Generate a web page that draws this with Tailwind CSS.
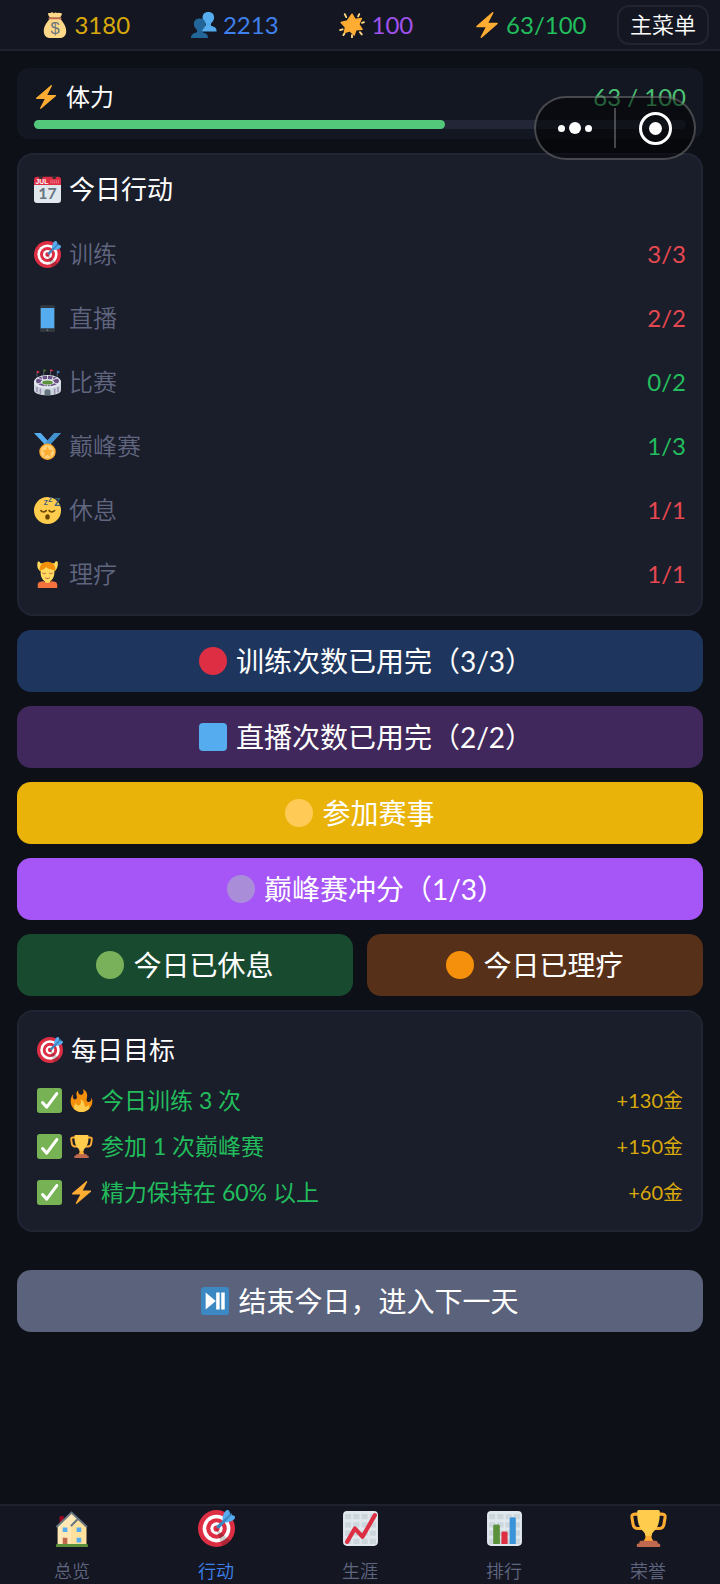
<!DOCTYPE html>
<html lang="zh-CN">
<head>
  <meta charset="UTF-8">
  <meta name="viewport" content="width=device-width, initial-scale=1.0">
  <title>今日行动</title>
  <script src="https://cdn.jsdelivr.net/npm/@tailwindcss/browser@4"></script>
</head>
<body class="bg-[#0d1017] text-white font-['Lato','Noto_Sans_CJK_SC',sans-serif] font-normal">

  <!-- iconos -->
  <svg class="hidden" xmlns="http://www.w3.org/2000/svg">
    <symbol id="bolt" viewBox="0 0 36 36">
      <path fill="#FFAC33" d="M32.938 15.651C32.792 15.26 32.418 15 32 15H19.925L26.89 1.458c.219-.426.106-.947-.271-1.243C26.437.071 26.218 0 26 0c-.233 0-.466.082-.653.243L18 6.588 3.347 19.243c-.316.273-.43.714-.284 1.105S3.582 21 4 21h12.075L9.11 34.542c-.219.426-.106.947.271 1.243.182.144.401.215.619.215.233 0 .466-.082.653-.243L18 29.412l14.653-12.655c.317-.273.43-.714.285-1.106z"/>
    </symbol>
    <symbol id="target" viewBox="0 0 36 36">
      <circle fill="#DD2E44" cx="18" cy="18" r="18"/><circle fill="#FFF" cx="18" cy="18" r="13.5"/>
      <circle fill="#DD2E44" cx="18" cy="18" r="10"/><circle fill="#FFF" cx="18" cy="18" r="6"/>
      <circle fill="#DD2E44" cx="18" cy="18" r="3"/>
      <path opacity=".2" d="M18.24 18.282l13.144 11.754s-2.647 3.376-7.89 5.109L17.579 18.42l.661-.138z"/>
      <path fill="#55ACEE" d="M24.016 6.981c-.403 2.079 0 4.691 0 4.691l7.054-7.388c.291-1.454-.528-3.932-1.718-4.238-1.19-.306-4.079.803-5.336 6.935zm5.003 5.003c-2.079.403-4.691 0-4.691 0l7.388-7.054c1.454-.291 3.932.528 4.238 1.718.306 1.19-.803 4.079-6.935 5.336z"/>
      <path fill="#3A87C2" d="M32.798 4.485L21.176 17.587c-.362.362-1.673.882-2.51.046-.836-.836-.419-2.08-.057-2.443L31.815 3.501s.676-.635 1.159-.152-.176 1.136-.176 1.136z"/>
    </symbol>
    <symbol id="money" viewBox="0 0 36 36">
      <path fill="#FDD888" d="M11 9C7 14 2.500 19 2.500 26.500 2.500 33 7 36 12 36h12c5 0 9.500-3 9.500-9.500C33.500 19 29 14 25 9z"/>
      <path fill="#FDD888" d="M11 8c-1-2-3-4-2.500-6C9 .500 11 2 12.500 1S15 .500 16 1.500 18.500 0 20 1s2-.500 3.500 0S27 1 27.500 2.500C28 4 26 6 25 8z"/>
      <path fill="#BF6952" d="M10 7.500h16a1.200 1.200 0 0 1 0 2.500H10a1.200 1.200 0 0 1 0-2.500z"/>
      <text x="18" y="31" font-size="23" font-family="Liberation Sans" text-anchor="middle" fill="#67757F">$</text>
    </symbol>
    <symbol id="people" viewBox="0 0 36 36">
      <path fill="#55ACEE" d="M35.500 27c0-6-4-6.500-7-7.500-1.500-.500-1.500-3 0-4.500 2-2 3.500-4.500 3.500-7.500C32 3 29 0 24 0s-8 3-8 7.500c0 3 1.500 5.500 3.500 7.500 1.500 1.500 1.500 4 0 4.500-3 1-7 2-7 7.500z"/>
      <path fill="#226699" d="M23.500 36c0-6-4-6.500-7-7.500-1.500-.500-1.500-3 0-4.500 2-2 3.500-4.500 3.500-7.500C20 12 17 9 12 9s-8 3-8 7.500c0 3 1.500 5.500 3.500 7.500 1.500 1.500 1.500 4 0 4.500-3 1-7.500 2-7.500 7.500z"/>
    </symbol>
    <symbol id="star" viewBox="0 0 36 36">
      <path fill="#FFAC33" stroke="#FFAC33" stroke-width="2" stroke-linejoin="round" d="M18 3l4.500 7.500 8.500-1.500-3.500 8L32 24l-8.500.500L21 32l-6-6-7.500 2.500L9 21l-6-6.500 8.500-2z"/>
      <path stroke="#FFD983" stroke-width="2.600" stroke-linecap="round" d="M8 3l2 4M28 3l-1.500 3M32 15l2.500-1M29 28l2.500 3M18 32v3M5 24l-3.500 1M6 32l1.500-2"/>
    </symbol>
    <symbol id="calendar" viewBox="0 0 36 36">
      <path fill="#E1E8ED" d="M36 32a4 4 0 0 1-4 4H4a4 4 0 0 1-4-4V8h36z"/>
      <path fill="#DD2E44" d="M4 1h28a4 4 0 0 1 4 4v7H0V5a4 4 0 0 1 4-4z"/>
      <circle cx="9" cy="1.500" r="2.500" fill="#292F33"/><circle cx="27" cy="1.500" r="2.500" fill="#292F33"/>
      <path stroke="#F4ABBA" stroke-width="1.300" stroke-dasharray="1.300 1.200" d="M22 6.500h12M22 9h12"/>
      <text x="2" y="11" font-size="9" font-weight="700" font-family="Liberation Sans" fill="#fff">JUL</text>
      <text x="18" y="31" font-size="21" font-weight="700" font-family="Lato" text-anchor="middle" fill="#66757F">17</text>
    </symbol>
    <symbol id="phone" viewBox="0 0 36 36">
      <rect x="8" y="0" width="20" height="36" rx="2.500" fill="#31373D"/>
      <rect x="9" y="4" width="18" height="27" fill="#55ACEE"/><circle cx="18" cy="33.500" r="1.200" fill="#66757F"/>
    </symbol>
    <symbol id="stadium" viewBox="0 0 36 36">
      <path stroke="#66757F" d="M4 10V3M13 8V1M22 8V1M31 10V3"/>
      <path fill="#DD2E44" d="M4 2l4 2-4 2zM22 0l4 2-4 2z"/><path fill="#3B94D9" d="M31 2l4 2-4 2z"/><path fill="#3E721D" d="M13 0l4 2-4 2z"/>
      <path fill="#CCD6DD" d="M0 17h36v11c0 5-8 7-18 7S0 33 0 28z"/>
      <ellipse cx="18" cy="17" rx="18" ry="9" fill="#E1E8ED"/>
      <ellipse cx="18" cy="16" rx="15.500" ry="7" fill="#6A5085"/>
      <path stroke="#E1E8ED" stroke-width="1.200" d="M18 8v16M10 9l5 14M26 9l-5 14M4 12l28 8M32 12L4 20"/>
      <ellipse cx="18" cy="17.500" rx="9" ry="4.200" fill="#E1E8ED"/><ellipse cx="18" cy="18" rx="7" ry="2.800" fill="#5C913B"/>
      <path stroke="#9B8BB5" stroke-width="2" d="M4 24v7M8.500 26v7M27.500 26v7M32 24v7"/>
      <path fill="#66757F" d="M14 35v-5c0-4 8-4 8 0v5z"/>
    </symbol>
    <symbol id="medal" viewBox="0 0 36 36">
      <path fill="#55ACEE" d="M36 0h-9l-9 10-9-10H0l14 15h8z"/><path fill="#3B88C3" d="M27 0h9L22 15h-8z" opacity=".7"/>
      <circle cx="18" cy="25" r="11" fill="#FFAC33"/><circle cx="18" cy="25" r="9" fill="#FFD17A"/>
      <path fill="#FFAC33" d="M18 17.500l2.200 5 5.400.500-4.100 3.600 1.300 5.400-4.800-2.900-4.800 2.900 1.300-5.400-4.100-3.600 5.400-.500z"/>
    </symbol>
    <symbol id="sleepy" viewBox="0 0 36 36">
      <circle cx="18" cy="18" r="18" fill="#FFCC4D"/>
      <path fill="none" stroke="#664500" stroke-width="2" stroke-linecap="round" d="M9 18c2 2.500 5.500 2.500 7.500 0M20 18c2 2.500 5.500 2.500 7.500 0"/>
      <ellipse cx="18" cy="26.500" rx="3" ry="3.500" fill="#664500"/>
      <g font-family="Liberation Sans" font-weight="700" fill="#3B5F7C"><text x="13" y="11" font-size="9">Z</text><text x="19" y="7" font-size="9">Z</text><text x="27" y="12" font-size="14">Z</text></g>
    </symbol>
    <symbol id="massage" viewBox="0 0 36 36">
      <path fill="#FFDC5D" d="M5 1c2-1 3 0 3.500 2h19C28 0 30 0 31.500 1c1 4 0 8-3 12h-21C4 10 4 5 5 1z"/>
      <path fill="#F4900C" d="M7.500 11C7.500 5 12 1 18 1s10.500 4 10.500 10l-2 4h-17z"/>
      <path fill="#FFDC5D" d="M9 12c4 0 6-2 7-4 3 3 8 4 11 4 1 8-2 13-5.500 15v3l-3.500 3-3.500-3v-3C11 25 8 20 9 12z"/>
      <path stroke="#C1694F" stroke-width="1.400" fill="none" stroke-linecap="round" d="M11.500 16c1 1 3 1 4 0M20.500 16c1 1 3 1 4 0M15.500 22.500c1.500 1 3.500 1 5 0"/>
      <path fill="#F4723E" d="M5 36v-4c0-4 3-5 9-5 1 3 7 3 8 0 6 0 9 1 9 5v4z"/>
    </symbol>
    <symbol id="check" viewBox="0 0 36 36">
      <rect width="36" height="36" rx="4" fill="#77B255"/>
      <path fill="none" stroke="#fff" stroke-width="4.400" stroke-linecap="round" stroke-linejoin="round" d="M8 21l6 6.500L28.500 8"/>
    </symbol>
    <symbol id="fire" viewBox="0 0 36 36">
      <path fill="#F4900C" d="M35 19c0-2.062-.367-4.039-1.040-5.868-.46 5.389-3.333 8.157-6.335 6.868-2.812-1.208-.917-5.917-.777-8.164.236-3.809-.012-8.169-6.931-11.794 2.875 5.500.333 8.917-2.333 9.125-2.958.231-5.667-2.542-4.667-7.042-3.238 2.386-3.332 6.402-2.333 9 1.042 2.708-.042 4.958-2.583 5.208-2.840.280-4.418-3.041-2.963-8.333C2.520 10.965 1 14.805 1 19c0 9.389 7.611 17 17 17s17-7.611 17-17z"/>
      <path fill="#FFCC4D" d="M28.394 23.999c.148 3.084-2.561 4.293-4.019 3.709-2.106-.843-1.541-2.291-2.083-5.291s-2.625-5.083-5.708-6c2.250 6.333-1.247 8.667-3.080 9.084-1.872.426-3.753-.001-3.968-4.007C7.352 23.668 6 26.676 6 30c0 .368.023.730.055 1.090C9.125 34.124 13.342 36 18 36s8.875-1.876 11.945-4.910c.032-.360.055-.722.055-1.090 0-2.187-.584-4.236-1.606-6.001z"/>
    </symbol>
    <symbol id="trophy" viewBox="0 0 36 36">
      <path fill="none" stroke="#FFAC33" stroke-width="3" d="M10 4H5C2 4 1.500 5 2 8l1 6c.500 3 2 4 5 4h5M26 4h5c3 0 3.500 1 3 4l-1 6c-.500 3-2 4-5 4h-5"/>
      <path fill="#FFAC33" d="M15 22h6v5l2 4H13l2-4z"/>
      <path fill="#FFCC4D" d="M7 1.500C7 .500 8 0 9 0h18c1 0 2 .500 2 1.500C29 13 27 17 23 21c-1.500 1.500-2 3-2 4h-6c0-1-.500-2.500-2-4C9 17 7 13 7 1.500z"/>
      <path fill="#C1694F" d="M11 30h14c1.500 0 2 1 2 2.500h1c1 0 1.500 1 1.500 2s-.500 1.500-1.500 1.500H8c-1 0-1.500-.500-1.500-1.500s.500-2 1.500-2h1C9 31 9.500 30 11 30z"/>
    </symbol>
    <symbol id="playpause" viewBox="0 0 36 36">
      <rect width="36" height="36" rx="4" fill="#3B88C3"/>
      <path fill="#fff" d="M6 7l13 11L6 29zM19.500 7H24v22h-4.500zM26 7h4.500v22H26z"/>
    </symbol>
    <symbol id="house" viewBox="0 0 36 36">
      <path fill="#A0041E" d="M5.500 6h4v9h-4z"/>
      <path fill="#FFE8B6" d="M3.500 15.500L17 3l6 5 8.500 8v18h-28z"/><path fill="#FFD983" d="M16.500 17l7-7 8 7v17h-15z" opacity=".5"/>
      <path fill="none" stroke="#66757F" stroke-width="2" stroke-linecap="round" d="M3 16L17 2.500 31.500 16M17 15l6-6"/>
      <path fill="#55ACEE" d="M8.500 17H13v4.500H8.500zM22 17h4.500v4.500H22zM22 27h4.500v4.500H22z"/>
      <path fill="#C1694F" d="M8.500 27H13v7H8.500z"/><path fill="#5C913B" d="M3 33h29a1 1 0 0 1 1 1v2H2v-2a1 1 0 0 1 1-1z"/>
    </symbol>
    <symbol id="grid" viewBox="0 0 36 36">
      <rect x="1" y="1" width="34" height="34" rx="4" fill="#E1E8ED"/>
      <path fill="#CCD6DD" d="M3 4h6v5H3zM11 4h6v5h-6zM19 4h6v5h-6zM27 4h6v5h-6zM3 12h6v5H3zM11 12h6v5h-6zM19 12h6v5h-6zM27 12h6v5h-6zM3 20h6v5H3zM11 20h6v5h-6zM19 20h6v5h-6zM27 20h6v5h-6zM3 28h6v5H3zM11 28h6v5h-6zM19 28h6v5h-6zM27 28h6v5h-6z"/>
    </symbol>
    <symbol id="trend" viewBox="0 0 36 36">
      <use href="#grid"/>
      <path fill="none" stroke="#DD2E44" stroke-width="4" stroke-linecap="round" stroke-linejoin="round" d="M5 31l7.500-13L20 26 32 5"/>
    </symbol>
    <symbol id="bars" viewBox="0 0 36 36">
      <use href="#grid"/>
      <path fill="#5C913B" d="M7 33V15.500q0-1.500 1.500-1.500h3.500q1.500 0 1.500 1.500V33z"/>
      <path fill="#DD2E44" d="M15 33V22.500q0-1.500 1.500-1.500h3q1.500 0 1.500 1.500V33z"/>
      <path fill="#3B94D9" d="M23 33V8.500q0-1.500 1.500-1.500h3q1.500 0 1.500 1.500V33z"/>
    </symbol>
  </svg>

  <div class="relative flex flex-col min-h-screen">
    <header class="flex items-center h-[51px] pl-3 pr-[11px] bg-[#141722] border-b-2 border-[#1e222e] text-2xl">
      <div class="flex flex-1 justify-around items-center">
        <span class="flex items-center gap-[6px] text-[#d9a90c]"><svg class="size-[26px]"><use href="#money"/></svg>3180</span>
        <span class="flex items-center gap-[6px] text-[#3f80ec]"><svg class="size-[26px]"><use href="#people"/></svg>2213</span>
        <span class="flex items-center gap-[6px] text-[#a052ee]"><svg class="size-[26px]"><use href="#star"/></svg>100</span>
        <span class="flex items-center gap-[6px] text-[#22bd5c]"><svg class="size-[26px]"><use href="#bolt"/></svg>63/100</span>
      </div>
      <button class="h-10 w-[92px] rounded-xl border-2 border-[#212532] bg-[#141722] text-[22px] font-[350]">主菜单</button>
    </header>

    <main class="flex flex-col gap-[14px] px-[17px] pt-[17px]">
      <section class="rounded-xl bg-[#131722] px-[17px] pt-3 pb-[10px]">
        <div class="flex items-center justify-between h-[34px] mb-[6px] text-2xl">
          <span id="stamina-label" class="flex items-center gap-2"><svg class="size-6"><use href="#bolt"/></svg>体力</span>
          <span class="text-[#4cc274]">63 / 100</span>
        </div>
        <div class="h-[9px] rounded-full bg-[#222636]" role="progressbar" aria-labelledby="stamina-label" aria-valuenow="63" aria-valuemin="0" aria-valuemax="100">
          <div class="h-full rounded-full bg-[#54c87a]" style="width: 63%"></div>
        </div>
      </section>

      <section class="rounded-2xl border-2 border-[#212533] bg-[#1a1d2a] px-[15px] pt-[14px] pb-2">
        <h2 class="flex items-center gap-2 h-10 mb-[13px] text-[26px]"><svg class="size-[27px]"><use href="#calendar"/></svg>今日行动</h2>
        <ul class="text-2xl text-[#606680]">
          <li class="flex items-center justify-between h-16"><span class="flex items-center gap-2 font-[350]"><svg class="size-[27px]"><use href="#target"/></svg>训练</span><span class="text-[#e54850]">3/3</span></li>
          <li class="flex items-center justify-between h-16"><span class="flex items-center gap-2 font-[350]"><svg class="size-[27px]"><use href="#phone"/></svg>直播</span><span class="text-[#e54850]">2/2</span></li>
          <li class="flex items-center justify-between h-16"><span class="flex items-center gap-2 font-[350]"><svg class="size-[27px]"><use href="#stadium"/></svg>比赛</span><span class="text-[#22bd5c]">0/2</span></li>
          <li class="flex items-center justify-between h-16"><span class="flex items-center gap-2 font-[350]"><svg class="size-[27px]"><use href="#medal"/></svg>巅峰赛</span><span class="text-[#22bd5c]">1/3</span></li>
          <li class="flex items-center justify-between h-16"><span class="flex items-center gap-2 font-[350]"><svg class="size-[27px]"><use href="#sleepy"/></svg>休息</span><span class="text-[#e54850]">1/1</span></li>
          <li class="flex items-center justify-between h-16"><span class="flex items-center gap-2 font-[350]"><svg class="size-[27px]"><use href="#massage"/></svg>理疗</span><span class="text-[#e54850]">1/1</span></li>
        </ul>
      </section>

      <button class="flex items-center justify-center gap-[9px] h-[62px] pl-3 rounded-[14px] bg-[#1e355e] text-[28px]"><span class="size-7 rounded-full bg-[#dd2e44]"></span>训练次数已用完（3/3）</button>
      <button class="flex items-center justify-center gap-[9px] h-[62px] pl-3 rounded-[14px] bg-[#40275c] text-[28px]"><span class="size-7 rounded-sm bg-[#55acee]"></span>直播次数已用完（2/2）</button>
      <button class="flex items-center justify-center gap-[9px] h-[62px] rounded-[14px] bg-[#e9b30a] text-[28px]"><span class="size-7 rounded-full bg-[#ffcb56]"></span>参加赛事</button>
      <button class="flex items-center justify-center gap-[9px] h-[62px] pl-3 rounded-[14px] bg-[#a655f7] text-[28px]"><span class="size-7 rounded-full bg-[#aa8dd8]"></span>巅峰赛冲分（1/3）</button>
      <div class="grid grid-cols-2 gap-[14px]">
        <button class="flex items-center justify-center gap-[9px] h-[62px] rounded-[14px] bg-[#184a2f] text-[28px]"><span class="size-7 rounded-full bg-[#78b159]"></span>今日已休息</button>
        <button class="flex items-center justify-center gap-[9px] h-[62px] rounded-[14px] bg-[#573019] text-[28px]"><span class="size-7 rounded-full bg-[#f4900c]"></span>今日已理疗</button>
      </div>

      <section class="rounded-2xl border-2 border-[#212533] bg-[#1a1d2a] px-[18px] pt-[18px] pb-[15px]">
        <h2 class="flex items-center gap-2 h-10 mb-[7px] text-[26px]"><svg class="size-[26px]"><use href="#target"/></svg>每日目标</h2>
        <ul class="text-[23px] text-[#22bd5c]">
          <li class="flex items-center gap-2 h-[46px]"><svg class="size-[25px]"><use href="#check"/></svg><svg class="size-[23px]"><use href="#fire"/></svg>今日训练 3 次<span class="ml-auto text-xl text-[#d9a90c]">+130金</span></li>
          <li class="flex items-center gap-2 h-[46px]"><svg class="size-[25px]"><use href="#check"/></svg><svg class="size-[23px]"><use href="#trophy"/></svg>参加 1 次巅峰赛<span class="ml-auto text-xl text-[#d9a90c]">+150金</span></li>
          <li class="flex items-center gap-2 h-[46px]"><svg class="size-[25px]"><use href="#check"/></svg><svg class="size-[23px]"><use href="#bolt"/></svg>精力保持在 60% 以上<span class="ml-auto text-xl text-[#d9a90c]">+60金</span></li>
        </ul>
      </section>

      <button class="flex items-center justify-center gap-[9px] h-[62px] mt-6 rounded-[14px] bg-[#5b627b] text-[28px]"><svg class="size-7"><use href="#playpause"/></svg>结束今日，进入下一天</button>
    </main>

    <nav class="mt-auto grid grid-cols-5 h-20 border-t-2 border-[#1e222e] bg-[#141722] text-lg font-[350] text-[#606680]">
      <a href="#" class="flex flex-col items-center gap-2 pt-1"><svg class="size-[37px]"><use href="#house"/></svg><span class="leading-8">总览</span></a>
      <a href="#" class="flex flex-col items-center gap-2 pt-1 text-[#3f80ec]"><svg class="size-[37px]"><use href="#target"/></svg><span class="leading-8">行动</span></a>
      <a href="#" class="flex flex-col items-center gap-2 pt-1"><svg class="size-[37px]"><use href="#trend"/></svg><span class="leading-8">生涯</span></a>
      <a href="#" class="flex flex-col items-center gap-2 pt-1"><svg class="size-[37px]"><use href="#bars"/></svg><span class="leading-8">排行</span></a>
      <a href="#" class="flex flex-col items-center gap-2 pt-1"><svg class="size-[37px]"><use href="#trophy"/></svg><span class="leading-8">荣誉</span></a>
    </nav>

    <!-- cápsula flotante del mini programa -->
    <div class="absolute top-24 right-6 flex items-center w-[162px] h-16 rounded-full border-2 border-white/25 bg-black/50">
      <button class="flex flex-1 items-center justify-center gap-1" aria-label="更多">
        <span class="size-[7px] rounded-full bg-white"></span><span class="size-3 rounded-full bg-white"></span><span class="size-[7px] rounded-full bg-white"></span>
      </button>
      <span class="w-[2px] h-10 bg-white/25"></span>
      <button class="flex flex-1 items-center justify-center" aria-label="关闭">
        <span class="flex items-center justify-center size-[33px] rounded-full border-[3px] border-white"><span class="size-[13px] rounded-full bg-white"></span></span>
      </button>
    </div>
  </div>
</body>
</html>
